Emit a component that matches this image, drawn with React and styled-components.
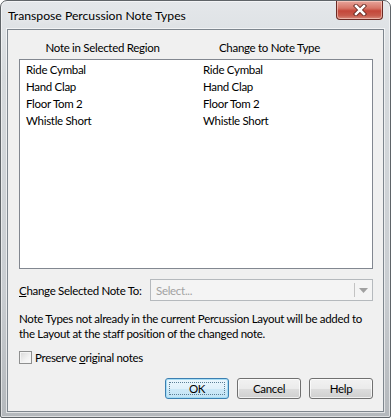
import React from "react";
import styled, { createGlobalStyle } from "styled-components";

const Global = createGlobalStyle`
  html, body { margin: 0; padding: 0; background: #ffffff; }
  * { box-sizing: border-box; }
`;

const FONT = `Lato, "Noto Sans", "Liberation Sans", sans-serif`;

const Window = styled.div`
  width: 391px;
  height: 418px;
  display: flex;
  flex-direction: column;
  padding: 0 6px 5px 6px;
  border: 1px solid #5f6468;
  border-radius: 7px 7px 2px 2px;
  background: linear-gradient(180deg, #e4e7ea 0%, #d6dadd 18%, #c9cdd1 70%, #b4b8bc 100%);
  box-shadow: inset 0 0 0 1px rgba(255, 255, 255, 0.55);
  font-family: ${FONT};
  font-size: 11.5px;
  letter-spacing: -0.3px;
  color: #000;
`;

const TitleBar = styled.div`
  height: 28px;
  display: flex;
  align-items: flex-start;
  justify-content: space-between;
`;

const Title = styled.div`
  padding: 7px 0 0 1px;
  font-size: 12.2px;
  letter-spacing: 0;
  line-height: 15px;
  color: #000;
  text-shadow: 0 0 6px rgba(255, 255, 255, 0.9);
`;

const CloseButton = styled.div`
  width: 47px;
  height: 19px;
  margin-right: 1px;
  border: 1px solid #6b2a24;
  border-top: none;
  border-radius: 0 0 4px 4px;
  background: linear-gradient(180deg, #e7a59b 0%, #d67567 40%, #c4473a 55%, #c75a4b 80%, #d88a7c 100%);
  box-shadow: inset 0 0 0 1px rgba(255, 220, 210, 0.55);
  display: flex;
  align-items: center;
  justify-content: center;
`;

const Client = styled.div`
  flex: 1;
  display: flex;
  flex-direction: column;
  padding: 0 10px 0 11px;
  background: #f0f0f0;
  border: 1px solid #7e868e;
  box-shadow: 0 0 0 1px rgba(255, 255, 255, 0.6);
`;

const HeaderRow = styled.div`
  display: grid;
  grid-template-columns: 167px 167px;
  padding-top: 10px;
  margin-bottom: 4px;
  line-height: 15px;
`;

const HeaderCell = styled.div`
  text-align: center;
`;

const ListBox = styled.div`
  height: 210px;
  background: #ffffff;
  border: 1px solid #828790;
  padding-top: 1px;
`;

const Row = styled.div`
  display: grid;
  grid-template-columns: 177px 1fr;
  height: 17px;
  line-height: 17px;
`;

const Cell = styled.div`
  padding-left: 6px;
  white-space: nowrap;
`;

const ComboRow = styled.div`
  display: flex;
  align-items: center;
  margin-top: 10px;
  height: 22px;
`;

const Label = styled.div`
  width: 131px;
  white-space: nowrap;
`;

const Combo = styled.div`
  flex: 1;
  height: 22px;
  display: flex;
  align-items: center;
  border: 1px solid #b5b9bd;
  background: #f4f4f4;
  color: #a2a2a2;
`;

const ComboText = styled.div`
  flex: 1;
  padding-left: 5px;
`;

const ComboDivider = styled.div`
  width: 1px;
  height: 14px;
  background: #c3c3c3;
`;

const ComboArrow = styled.div`
  width: 17px;
  display: flex;
  align-items: center;
  justify-content: center;
`;

const Note = styled.div`
  margin-top: 10px;
  line-height: 15px;
  white-space: nowrap;
`;

const CheckRow = styled.label`
  display: flex;
  align-items: center;
  margin-top: 9px;
  height: 14px;
`;

const CheckBox = styled.span`
  width: 13px;
  height: 13px;
  border: 1px solid #8e8f8f;
  background: linear-gradient(135deg, #d8d8d8 0%, #f2f2f2 60%, #fbfbfb 100%);
  box-shadow: inset 0 0 0 1px #f4f4f4;
  margin-right: 3px;
`;

const ButtonRow = styled.div`
  display: flex;
  justify-content: flex-end;
  gap: 8px;
  margin-top: 14px;
`;

const Button = styled.div`
  width: 64px;
  height: 21px;
  display: flex;
  align-items: center;
  justify-content: center;
  border: 1px solid ${(p) => (p.$default ? "#3c7fb1" : "#707070")};
  border-radius: 3px;
  background: ${(p) =>
    p.$default
      ? "linear-gradient(180deg, #eaf6fd 0%, #e0f1fb 50%, #cde9f8 51%, #c2e3f5 100%)"
      : "linear-gradient(180deg, #f2f2f2 0%, #ebebeb 50%, #dddddd 51%, #cfcfcf 100%)"};
  box-shadow: inset 0 0 0 1px ${(p) => (p.$default ? "rgba(160, 220, 245, 0.9)" : "rgba(255, 255, 255, 0.7)")};
  position: relative;
`;

const FocusRing = styled.span`
  position: absolute;
  inset: 3px;
  border: 1px dotted #5a7f96;
  pointer-events: none;
`;

const U = styled.span`
  text-decoration: underline;
`;

const rows = ["Ride Cymbal", "Hand Clap", "Floor Tom 2", "Whistle Short"];

export default function App() {
  return (
    <>
      <Global />
      <Window>
        <TitleBar>
          <Title>Transpose Percussion Note Types</Title>
          <CloseButton>
            <svg width="14" height="12" viewBox="0 0 14 12">
              <path d="M3 2 L11 10 M11 2 L3 10" stroke="#5a1f18" strokeWidth="4.2" strokeLinecap="square" />
              <path d="M3 2 L11 10 M11 2 L3 10" stroke="#ffffff" strokeWidth="2.6" strokeLinecap="square" />
            </svg>
          </CloseButton>
        </TitleBar>
        <Client>
          <HeaderRow>
            <HeaderCell>Note in Selected Region</HeaderCell>
            <HeaderCell>Change to Note Type</HeaderCell>
          </HeaderRow>
          <ListBox>
            {rows.map((r) => (
              <Row key={r}>
                <Cell>{r}</Cell>
                <Cell>{r}</Cell>
              </Row>
            ))}
          </ListBox>
          <ComboRow>
            <Label>
              <U>C</U>hange Selected Note To:
            </Label>
            <Combo>
              <ComboText>Select...</ComboText>
              <ComboDivider />
              <ComboArrow>
                <svg width="9" height="5" viewBox="0 0 9 5">
                  <path d="M0 0 H9 L4.5 5 Z" fill="#a0a0a0" />
                </svg>
              </ComboArrow>
            </Combo>
          </ComboRow>
          <Note>
            Note Types not already in the current Percussion Layout will be added to
            <br />
            the Layout at the staff position of the changed note.
          </Note>
          <CheckRow>
            <CheckBox />
            <span>
              Preserve <U>o</U>riginal notes
            </span>
          </CheckRow>
          <ButtonRow>
            <Button $default>
              OK
              <FocusRing />
            </Button>
            <Button>Cancel</Button>
            <Button>Help</Button>
          </ButtonRow>
        </Client>
      </Window>
    </>
  );
}
